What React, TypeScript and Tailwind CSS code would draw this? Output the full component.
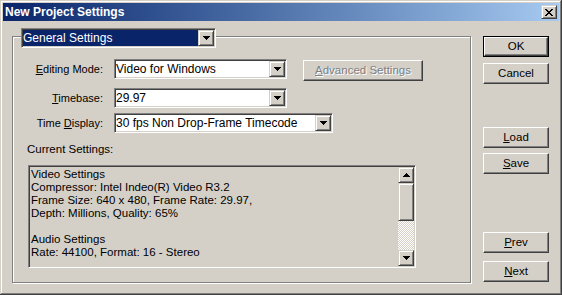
import React from 'react';

// Win2000 bevel styles
const raised =
  'border border-t-white border-l-white border-r-[#404040] border-b-[#404040] shadow-[inset_-1px_-1px_0_#808080]';
const raisedSmall =
  'border border-t-[#d4d0c8] border-l-[#d4d0c8] border-r-[#404040] border-b-[#404040] shadow-[inset_1px_1px_0_#fff,inset_-1px_-1px_0_#808080]';
const sunken =
  'border border-t-[#808080] border-l-[#808080] border-r-white border-b-white shadow-[inset_1px_1px_0_#404040,inset_-1px_-1px_0_#d4d0c8]';

const ArrowDown: React.FC = () => (
  <svg width="7" height="4" viewBox="0 0 7 4" shapeRendering="crispEdges">
    <path d="M0 0h7v1h-1v1h-1v1h-1v1h-1v-1h-1v-1h-1v-1h-1z" fill="#000" />
  </svg>
);

const ArrowUp: React.FC = () => (
  <svg width="7" height="4" viewBox="0 0 7 4" shapeRendering="crispEdges">
    <path d="M3 0h1v1h1v1h1v1h1v1h-7v-1h1v-1h1v-1h1z" fill="#000" />
  </svg>
);

interface ComboProps {
  value: string;
  width: string;
  selected?: boolean;
}

const Combo: React.FC<ComboProps> = ({ value, width, selected }) => (
  <div className={`flex h-[20px] ${width} ${sunken} ${selected ? 'bg-[#0a246a]' : 'bg-white'}`}>
    <div
      className={`flex-1 flex items-center pl-[1px] leading-none text-[12px] whitespace-nowrap overflow-hidden ${
        selected ? 'text-white' : 'text-black'
      }`}
    >
      {value}
    </div>
    <div className={`w-[16px] h-[16px] mt-[1px] mr-[1px] bg-[#d4d0c8] flex items-center justify-center ${raisedSmall}`}>
      <ArrowDown />
    </div>
  </div>
);

interface ButtonProps {
  children: React.ReactNode;
  className?: string;
  isDefault?: boolean;
}

const Button: React.FC<ButtonProps> = ({ children, className = '', isDefault }) => (
  <div className={`h-[21px] w-[66px] ${isDefault ? 'border border-black' : ''} ${className}`}>
    <div className={`w-full h-full bg-[#d4d0c8] flex items-center justify-center leading-none text-[11.5px] ${raised}`}>
      {children}
    </div>
  </div>
);

const lines = [
  'Video Settings',
  'Compressor: Intel Indeo(R) Video R3.2',
  'Frame Size: 640 x 480, Frame Rate: 29.97,',
  'Depth: Millions, Quality: 65%',
  '',
  'Audio Settings',
  'Rate: 44100, Format: 16 - Stereo',
];

const App: React.FC = () => {
  return (
    <div className="w-[562px] h-[295px] bg-[#d4d0c8] p-[3px] flex flex-col text-[11px] text-black font-['Liberation_Sans',Arial,sans-serif] shadow-[inset_-1px_-1px_0_#404040,inset_1px_1px_0_#d4d0c8,inset_-2px_-2px_0_#808080,inset_2px_2px_0_#fff] select-none">
      {/* 标题栏 */}
      <div className="h-[18px] flex items-center justify-between bg-gradient-to-r from-[#0a246a] to-[#a6caf0] pl-[2px] pr-[2px]">
        <span className="text-white font-bold text-[12px] leading-none">New Project Settings</span>
        <div className={`w-[16px] h-[14px] bg-[#d4d0c8] flex items-center justify-center ${raisedSmall}`}>
          <svg width="8" height="7" viewBox="0 0 8 7" shapeRendering="crispEdges">
            <path
              d="M0 0h2v1h1v1h2v-1h1v-1h2v1h-1v1h-1v1h-1v1h1v1h1v1h1v1h-2v-1h-1v-1h-2v1h-1v1h-2v-1h1v-1h1v-1h1v-1h-1v-1h-1v-1h-1z"
              fill="#000"
            />
          </svg>
        </div>
      </div>

      <div className="flex flex-1">
        {/* 分组框 */}
        <div className="relative mt-[15px] ml-[9px] w-[459px] h-[247px] border border-[#808080] shadow-[inset_1px_1px_0_#fff,1px_1px_0_#fff]">
          <div className="absolute left-[8px] -top-[9px]">
            <Combo value="General Settings" width="w-[195px]" selected />
          </div>

          <div className="pt-[22px]">
            <div className="flex items-start">
              <div className="w-[90px] h-[20px] flex items-center justify-end">
                <span>
                  <u>E</u>diting Mode:
                </span>
              </div>
              <div className="ml-[11px]">
                <Combo value="Video for Windows" width="w-[173px]" />
              </div>
              <div className={`ml-[16px] mt-[1px] w-[120px] h-[21px] bg-[#d4d0c8] flex items-center justify-center leading-none text-[11.5px] text-[#808080] [text-shadow:1px_1px_0_#fff] ${raised}`}>
                <span>
                  <u>A</u>dvanced Settings
                </span>
              </div>
            </div>

            <div className="flex items-center mt-[7px]">
              <div className="w-[90px] text-right">
                <u>T</u>imebase:
              </div>
              <div className="ml-[11px]">
                <Combo value="29.97" width="w-[173px]" />
              </div>
            </div>

            <div className="flex items-center mt-[5px]">
              <div className="w-[90px] text-right">
                Time <u>D</u>isplay:
              </div>
              <div className="ml-[11px]">
                <Combo value="30 fps Non Drop-Frame Timecode" width="w-[219px]" />
              </div>
            </div>

            <div className="mt-[10px] pl-[14px] h-[13px] leading-[13px] text-[11.5px]">Current Settings:</div>

            {/* 当前设置 */}
            <div className={`mt-[9px] ml-[15px] w-[388px] h-[103px] flex bg-[#d4d0c8] ${sunken}`}>
              <div className="flex-1 pl-[2px] pt-[2px] leading-[13px] text-[11.5px] whitespace-pre overflow-hidden">
                {lines.map((line, i) => (
                  <div key={i} className="h-[13px]">
                    {line}
                  </div>
                ))}
              </div>
              <div className="w-[16px] mt-[1px] mb-[1px] mr-[1px] flex flex-col">
                <div className={`h-[16px] bg-[#d4d0c8] flex items-center justify-center ${raisedSmall}`}>
                  <ArrowUp />
                </div>
                <div className={`h-[38px] bg-[#d4d0c8] ${raisedSmall}`} />
                <div className="flex-1 bg-[repeating-conic-gradient(#fff_0_25%,#d4d0c8_0_50%)] bg-[length:2px_2px]" />
                <div className={`h-[16px] bg-[#d4d0c8] flex items-center justify-center ${raisedSmall}`}>
                  <ArrowDown />
                </div>
              </div>
            </div>
          </div>
        </div>

        {/* 右侧按钮 */}
        <div className="ml-[12px] flex flex-col">
          <Button className="mt-[15px]" isDefault>
            OK
          </Button>
          <Button className="mt-[6px]">Cancel</Button>
          <Button className="mt-[43px]">
            <span>
              <u>L</u>oad
            </span>
          </Button>
          <Button className="mt-[5px]">
            <span>
              <u>S</u>ave
            </span>
          </Button>
          <Button className="mt-[58px]">
            <span>
              <u>P</u>rev
            </span>
          </Button>
          <Button className="mt-[8px]">
            <span>
              <u>N</u>ext
            </span>
          </Button>
        </div>
      </div>
    </div>
  );
};

export default App;
